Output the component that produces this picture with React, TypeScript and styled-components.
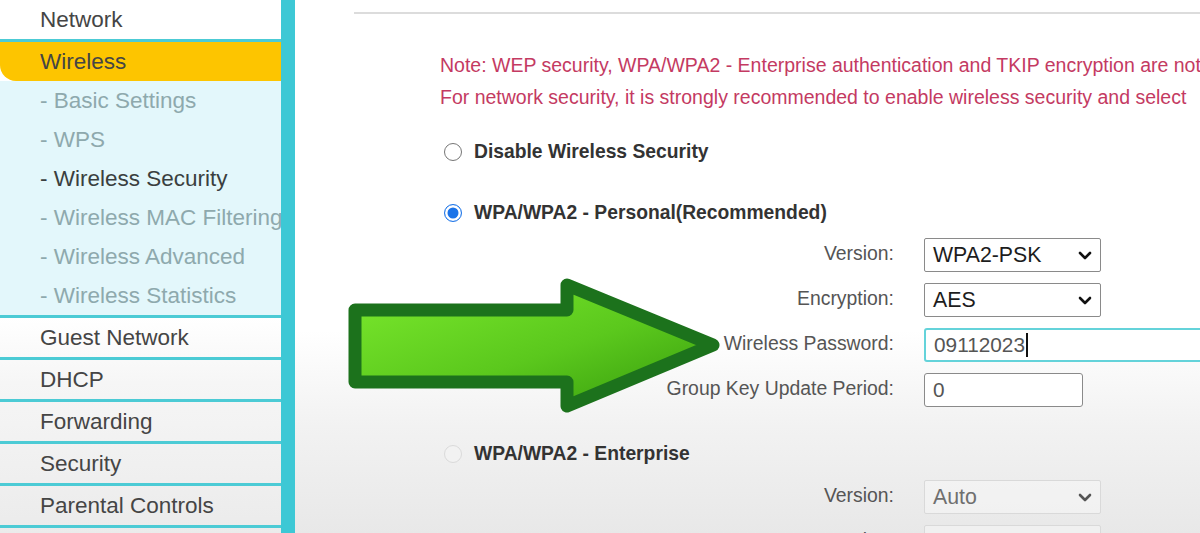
import React from "react";
import styled, { createGlobalStyle } from "styled-components";

const MENU_TOP = ["Network"];
const SUB_ITEMS = [
    { label: "- Basic Settings", active: false },
    { label: "- WPS", active: false },
    { label: "- Wireless Security", active: true },
    { label: "- Wireless MAC Filtering", active: false },
    { label: "- Wireless Advanced", active: false },
    { label: "- Wireless Statistics", active: false },
];
const MENU_BOTTOM = ["Guest Network", "DHCP", "Forwarding", "Security", "Parental Controls"];

const GlobalStyle = createGlobalStyle`
    html, body {
        margin: 0;
        padding: 0;
        height: 533px;
        overflow: hidden;
        background: #ffffff;
    }

    * {
        box-sizing: border-box;
    }
`;

const Chevron = () => (
    <svg width="14" height="9" viewBox="0 0 14 9">
        <polyline
            points="2,2 7,7 12,2"
            fill="none"
            stroke="currentColor"
            strokeWidth="2.6"
            strokeLinecap="round"
            strokeLinejoin="round"
        />
    </svg>
);

const GreenArrow = () => (
    <ArrowWrap>
        <svg width="380" height="145" viewBox="0 0 380 145">
            <defs>
                <linearGradient id="arrowFill" x1="0" y1="0" x2="1" y2="1">
                    <stop offset="0" stopColor="#7be92d" />
                    <stop offset="0.55" stopColor="#5bc81d" />
                    <stop offset="1" stopColor="#359a0c" />
                </linearGradient>
            </defs>
            <path
                d="M9,35 H221 V10 L367,70 L221,131 V107 H9 Z"
                fill="url(#arrowFill)"
                stroke="#1c721c"
                strokeWidth="13"
                strokeLinejoin="round"
            />
        </svg>
    </ArrowWrap>
);

const App = () => {
    return (
        <React.Fragment>
            <GlobalStyle />
            <Page>
                <Sidebar>
                    {MENU_TOP.map((item) => (
                        <MenuItem key={item}>{item}</MenuItem>
                    ))}
                    <MenuItem $selected>Wireless</MenuItem>
                    <SubMenu>
                        {SUB_ITEMS.map((item) => (
                            <SubItem key={item.label} $active={item.active}>
                                {item.label}
                            </SubItem>
                        ))}
                    </SubMenu>
                    <LowerMenu>
                        {MENU_BOTTOM.map((item) => (
                            <MenuItem key={item}>{item}</MenuItem>
                        ))}
                    </LowerMenu>
                </Sidebar>

                <Main>
                    <TopRule />
                    <Content>
                        <Note>
                            Note: WEP security, WPA/WPA2 - Enterprise authentication and TKIP encryption are not
                            <br />
                            For network security, it is strongly recommended to enable wireless security and select
                        </Note>

                        <RadioRow $top={24}>
                            <Radio />
                            Disable Wireless Security
                        </RadioRow>

                        <RadioRow $top={31}>
                            <Radio $checked />
                            WPA/WPA2 - Personal(Recommended)
                        </RadioRow>

                        <FormGrid $top={10}>
                            <Label>Version:</Label>
                            <SelectBox $width={177}>
                                WPA2-PSK
                                <Chevron />
                            </SelectBox>

                            <Label>Encryption:</Label>
                            <SelectBox $width={177}>
                                AES
                                <Chevron />
                            </SelectBox>

                            <Label>Wireless Password:</Label>
                            <TextBox $width={420} $focused>
                                09112023
                                <Caret />
                            </TextBox>

                            <Label>Group Key Update Period:</Label>
                            <TextBox $width={159}>0</TextBox>
                        </FormGrid>

                        <RadioRow $top={32}>
                            <Radio $disabled />
                            WPA/WPA2 - Enterprise
                        </RadioRow>

                        <FormGrid $top={11}>
                            <Label>Version:</Label>
                            <SelectBox $width={177} $disabled>
                                Auto
                                <Chevron />
                            </SelectBox>

                            <Label>Encryption:</Label>
                            <SelectBox $width={177} $disabled />
                        </FormGrid>
                    </Content>

                    <GreenArrow />
                </Main>
            </Page>
        </React.Fragment>
    );
};

export default App;

const Page = styled.div`
    display: flex;
    height: 533px;
    overflow: hidden;
    font-family: "Liberation Sans", Arial, sans-serif;
`;

const Sidebar = styled.nav`
    flex: 0 0 295px;
    display: flex;
    flex-direction: column;
    border-right: 14px solid #3dc8d5;
    background: #ffffff;
    overflow: hidden;
`;

const MenuItem = styled.div<{ $selected?: boolean }>`
    height: ${(p) => (p.$selected ? "39px" : "42px")};
    padding-left: 40px;
    display: flex;
    align-items: center;
    font-size: 22.5px;
    color: #454545;
    white-space: nowrap;
    border-bottom: ${(p) => (p.$selected ? "none" : "3px solid #4ccbd5")};
    background: ${(p) => (p.$selected ? "#fdc500" : "transparent")};
    border-bottom-left-radius: ${(p) => (p.$selected ? "16px" : "0")};
`;

const SubMenu = styled.div`
    display: flex;
    flex-direction: column;
    background: #e3f7fb;
    border-bottom: 3px solid #4ccbd5;
`;

const SubItem = styled.div<{ $active: boolean }>`
    height: 39px;
    padding-left: 40px;
    display: flex;
    align-items: center;
    font-size: 22.5px;
    white-space: nowrap;
    color: ${(p) => (p.$active ? "#3a3f40" : "#8ea9ad")};
`;

const LowerMenu = styled.div`
    display: flex;
    flex-direction: column;
    flex: 1;
    background: linear-gradient(to bottom, #ffffff 0%, #f6f6f6 30%, #ebebeb 100%);
`;

const Main = styled.main`
    position: relative;
    flex: 1;
    padding: 12px 0 0 59px;
    overflow: hidden;
    background: linear-gradient(to bottom, #ffffff 0%, #ffffff 62%, #f2f2f2 80%, #e8e8e8 100%);
`;

const TopRule = styled.div`
    height: 2px;
    background: #dcdcdc;
`;

const Content = styled.div`
    display: flex;
    flex-direction: column;
    padding-left: 86px;
`;

const Note = styled.p`
    margin: 35px 0 0;
    font-size: 19.5px;
    line-height: 32px;
    color: #c43a62;
    white-space: nowrap;
`;

const RadioRow = styled.div<{ $top: number }>`
    margin-top: ${(p) => p.$top}px;
    height: 30px;
    display: flex;
    align-items: center;
    gap: 12px;
    padding-left: 4px;
    font-size: 19.3px;
    font-weight: bold;
    color: #333;
    white-space: nowrap;
`;

const Radio = styled.span<{ $checked?: boolean; $disabled?: boolean }>`
    width: 18px;
    height: 18px;
    border-radius: 50%;
    flex: 0 0 18px;
    border: 1.5px solid ${(p) => (p.$checked ? "#1a73e8" : p.$disabled ? "#dadada" : "#767676")};
    background: ${(p) => (p.$disabled ? "#f2f2f2" : "#ffffff")};
    box-shadow: ${(p) => (p.$checked ? "inset 0 0 0 2.5px #ffffff, inset 0 0 0 9px #1a73e8" : "none")};
`;

const FormGrid = styled.div<{ $top: number }>`
    margin-top: ${(p) => p.$top}px;
    display: grid;
    grid-template-columns: 454px auto;
    grid-auto-rows: 34px;
    column-gap: 30px;
    row-gap: 11px;
    align-items: center;
`;

const Label = styled.span`
    text-align: right;
    font-size: 19.4px;
    color: #555;
    white-space: nowrap;
    margin-top: -4px;
`;

const SelectBox = styled.div<{ $width: number; $disabled?: boolean }>`
    width: ${(p) => p.$width}px;
    height: 34px;
    display: flex;
    align-items: center;
    justify-content: space-between;
    padding: 0 8px 0 8px;
    font-size: 21.3px;
    color: ${(p) => (p.$disabled ? "#6f6f6f" : "#1d1d1d")};
    background: ${(p) => (p.$disabled ? "rgba(255,255,255,0.35)" : "#ffffff")};
    border: 1.5px solid ${(p) => (p.$disabled ? "#d9d9d9" : "#8a8a8a")};
    border-radius: 2px;

    svg {
        color: ${(p) => (p.$disabled ? "#555" : "#111")};
    }
`;

const TextBox = styled.div<{ $width: number; $focused?: boolean }>`
    width: ${(p) => p.$width}px;
    height: 34px;
    display: flex;
    align-items: center;
    padding-left: 8px;
    font-size: 20.8px;
    color: #555;
    background: #ffffff;
    border: ${(p) => (p.$focused ? "2px solid #64d3da" : "1.5px solid #8a8a8a")};
    border-radius: 3px;
`;

const Caret = styled.span`
    display: inline-block;
    width: 1.5px;
    height: 24px;
    margin-left: 1px;
    background: #111;
`;

const ArrowWrap = styled.div`
    position: absolute;
    left: 51px;
    top: 275px;
    line-height: 0;
`;
